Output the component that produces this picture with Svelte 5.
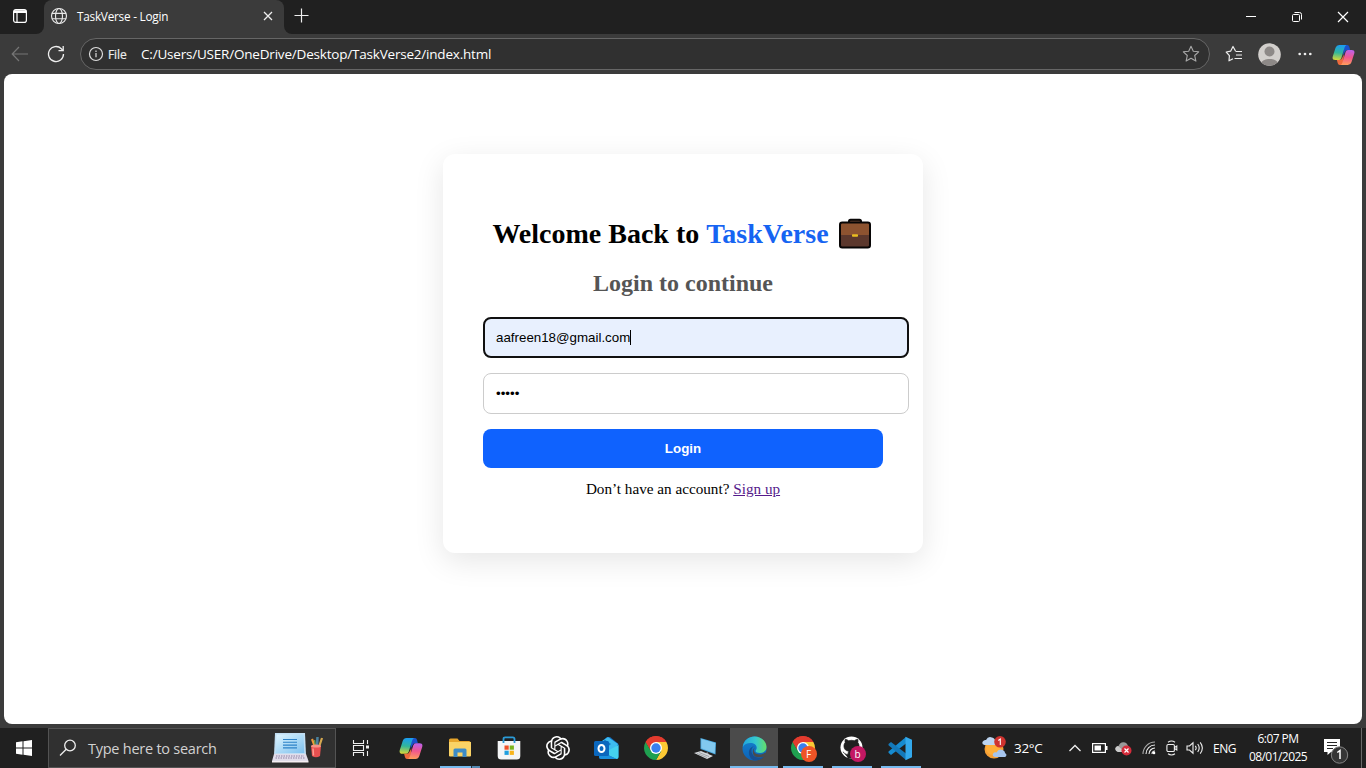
<script>
  const bars = [0, 1, 2, 3];
</script>

{#snippet copilot(size)}
  <svg width={size} height={size} viewBox="0 0 24 24">
    <defs>
      <linearGradient id="cpa" x1=".3" y1="0" x2=".2" y2="1"><stop offset="0" stop-color="#1b9df0" /><stop offset=".5" stop-color="#32b69a" /><stop offset="1" stop-color="#dcd936" /></linearGradient>
      <linearGradient id="cpb" x1=".3" y1="1" x2=".4" y2="0"><stop offset="0" stop-color="#ba62ee" /><stop offset=".5" stop-color="#f0568f" /><stop offset="1" stop-color="#ff9a5c" /></linearGradient>
    </defs>
    <path d="M12.500 2h3.500q1.500 0 2 1.800l.9 3.400h-2.700q-2 0-2.800 2.200L11.500 13z" fill="#1b50cc" />
    <path d="M7.500 2H15q-1.200.6-1.800 2.500L9.700 15.800Q9 17.800 7.300 17.800H3.500Q-.2 17.800.8 14L3.700 5Q4.700 2 7.500 2z" fill="url(#cpa)" />
    <g transform="rotate(180 12 12.500)">
      <path d="M12.500 2h3.500q1.500 0 2 1.800l.9 3.400h-2.700q-2 0-2.800 2.200L11.500 13z" fill="#ee6a3c" />
      <path d="M7.500 2H15q-1.200.6-1.800 2.500L9.700 15.800Q9 17.800 7.300 17.800H3.500Q-.2 17.800.8 14L3.700 5Q4.700 2 7.500 2z" fill="url(#cpb)" />
    </g>
  </svg>
{/snippet}

{#snippet chrome(size)}
  <svg width={size} height={size} viewBox="0 0 24 24">
    <path d="M12 12 1.610 6A12 12 0 0 1 22.390 6z" fill="#e33b2e" />
    <path d="M12 12V6h10.390A12 12 0 0 1 12 24l5.200-9z" fill="#fcc934" />
    <path d="M1.610 6A12 12 0 0 0 12 24l5.200-9L12 12 6.800 15z" fill="#1fa050" />
    <path d="M1.610 6 6.800 15 12 12 10 6z" fill="#1fa050" />
    <path d="M1.610 6A12 12 0 0 1 22.390 6H12L6.800 9 6.500 14.200z" fill="#e33b2e" />
    <circle cx="12" cy="12" r="6" fill="#fff" /><circle cx="12" cy="12" r="4.700" fill="#397fee" />
  </svg>
{/snippet}

<div class="screen">
  <header class="tabs">
    <div class="workspace">
      <svg width="16" height="16" viewBox="0 0 16 16" fill="none" stroke="#fff" stroke-width="1.200"><rect x="1.600" y="1.600" width="12.800" height="12.800" rx="2.200" /><path d="M2 3h12M2 4.300h12" stroke-width="1.600" /><path d="M5 5v9" /></svg>
    </div>
    <div class="tab">
      <svg class="globe" width="18" height="18" viewBox="0 0 18 18" fill="none" stroke="#e8e8e8" stroke-width="1.150"><circle cx="9" cy="9" r="7.500" /><ellipse cx="9" cy="9" rx="3.500" ry="7.500" /><path d="M2 6.300h14M2 11.700h14" /></svg>
      <span class="title">TaskVerse - Login</span>
      <svg class="x" width="10" height="10" viewBox="0 0 10 10" stroke="#eee" stroke-width="1.300"><path d="M1 1l8 8M9 1 1 9" /></svg>
    </div>
    <svg class="plus" width="15" height="15" viewBox="0 0 15 15" stroke="#eee" stroke-width="1.200"><path d="M7.500.5v14M.5 7.500h14" /></svg>
    <div class="window">
      <svg width="46" height="34" viewBox="0 0 46 34" stroke="#fff"><path d="M18 16.500h10" /></svg>
      <svg width="46" height="34" viewBox="0 0 46 34" fill="none" stroke="#fff"><rect x="18.500" y="14.500" width="7" height="7" rx="1" /><path d="M20.500 12.500h5q2 0 2 2v5" /></svg>
      <svg width="46" height="34" viewBox="0 0 46 34" stroke="#fff" stroke-width="1.200"><path d="M18 12l10 10M28 12 18 22" /></svg>
    </div>
  </header>

  <div class="toolbar">
    <svg class="back" width="18" height="16" viewBox="0 0 18 16" fill="none" stroke="#767676" stroke-width="1.200"><path d="M17 8H1.500M8 1 1.200 8 8 15" /></svg>
    <svg class="reload" width="18" height="18" viewBox="0 0 18 18" fill="none" stroke="#eee" stroke-width="1.300"><path d="M16.500 9A7.500 7.500 0 1 1 14.300 3.700L16 5.500" /><path d="M16.200 1v4.700h-4.700" /></svg>
    <div class="address">
      <svg width="16" height="16" viewBox="0 0 16 16" fill="none" stroke="#ddd" stroke-width="1.200"><circle cx="8" cy="8" r="6.500" /><path d="M8 7v4.200M8 4.600v1.300" /></svg>
      <span class="file">File</span>
      <span class="url">C:/Users/USER/OneDrive/Desktop/TaskVerse2/index.html</span>
      <svg class="star" width="18" height="18" viewBox="0 0 18 18" fill="none" stroke="#a8a8a8" stroke-width="1.100" stroke-linejoin="round"><path d="M9 1.200l2.300 5 5.400.6-4 3.700 1.200 5.600L9 13.300l-4.900 2.800 1.200-5.600-4-3.700 5.400-.6z" /></svg>
    </div>
    <svg class="fav" width="18" height="18" viewBox="0 0 18 18" fill="none" stroke="#eee" stroke-width="1.200" stroke-linejoin="round"><path d="M10.500 6 8 1.500 5.600 6.200 1.200 7l3.200 3.700L4 15.800l4-2.100M10.500 6.500H17M11 10h6M9.500 13.500H17" /></svg>
    <svg class="avatar" width="23" height="23" viewBox="0 0 23 23"><circle cx="11.500" cy="11.500" r="11.300" fill="#d2cfcc" /><circle cx="11.500" cy="8.500" r="5" fill="#8d8987" /><path d="M3.500 19.500C5 14.800 18 14.800 19.500 19.500a11.300 11.300 0 0 1-16 0z" fill="#8d8987" /></svg>
    <svg class="more" width="14" height="4" viewBox="0 0 14 4" fill="#eee"><circle cx="1.700" cy="2" r="1.350" /><circle cx="7" cy="2" r="1.350" /><circle cx="12.300" cy="2" r="1.350" /></svg>
    {@render copilot(23)}
  </div>

  <main>
    <section class="card">
      <h1><span>Welcome Back to <b>TaskVerse</b></span>
        <svg width="34" height="32" viewBox="0 0 34 32"><path d="M11 6V3.200q0-1.500 1.500-1.500h9q1.500 0 1.500 1.500V6" fill="#60402f" stroke="#080606" stroke-width="2" /><path d="M12.500 4.200h9" stroke="#8a5a44" stroke-width="1.200" /><rect x="2" y="4.500" width="30" height="25" rx="2.200" fill="#5c382d" /><path d="M2 6.500q0-2 2-2h26q2 0 2 2v9q0 1.500-2 1.500H4q-2 0-2-1.500z" fill="#8d5330" /><rect x="2" y="4.500" width="30" height="25" rx="2.200" fill="none" stroke="#080606" stroke-width="2" /><rect x="14" y="16.300" width="6" height="2.400" rx=".8" fill="#e9bd20" /></svg>
      </h1>
      <h2>Login to continue</h2>
      <div class="input focus">aafreen18@gmail.com<i></i></div>
      <div class="input">•••••</div>
      <button>Login</button>
      <p>Don’t have an account? <a href="#signup">Sign up</a></p>
    </section>
  </main>

  <footer class="taskbar">
    <div class="start"><svg width="16" height="16" viewBox="0 0 16 16" fill="#fff"><path d="M0 2.200 6.500 1.300V7.500H0zM7.500 1.150 16 0v7.500H7.500zM0 8.500h6.500v6.200L0 13.800zM7.500 8.500H16V16l-8.500-1.150z" /></svg></div>
    <div class="search">
      <svg width="18" height="18" viewBox="0 0 18 18" fill="none" stroke="#eee" stroke-width="1.300"><circle cx="11" cy="6.500" r="5.300" /><path d="M7.200 10.300 1 16.500" /></svg>
      <span>Type here to search</span>
      <svg class="art" width="52" height="32" viewBox="0 0 52 32">
        <defs><linearGradient id="scr" x1="0" y1="0" x2="1" y2="1"><stop stop-color="#dff5ff" /><stop offset="1" stop-color="#7cc0ee" /></linearGradient></defs>
        <path d="M3 1h30l1 22H2z" fill="#c1def3" /><path d="M4.500 2.500h27l.8 18.500H3.700z" fill="url(#scr)" />
        <path d="M11 7.500h14M11 10.300h14M11 13.100h14M11 15.900h14" stroke="#2c82c8" stroke-width="1.100" />
        <path d="M2 22h32l2.500 7H0z" fill="#e1ddea" /><path d="M4 24h28M3.500 26h29" stroke="#a99fbc" stroke-width="1.300" stroke-dasharray="1.500 1" /><path d="M0 29h36.500v1.500H0z" fill="#f5eef2" />
        <path d="m43 15-3-8" stroke="#ee9b38" stroke-width="2.200" /><path d="m45 15 .5-10" stroke="#4b829e" stroke-width="2.500" /><path d="m47 15 3-9" stroke="#d4a850" stroke-width="2.200" /><path d="m43.500 14-1-6" stroke="#5d9b58" stroke-width="1.500" />
        <path d="M39 14h10l-1 10q-4 2.500-8 0z" fill="#e95050" /><ellipse cx="44" cy="14" rx="5" ry="1.600" fill="#f49486" /><path d="M41 16.500l.5 7" stroke="#ff9d91" stroke-width="1.500" />
      </svg>
    </div>
    <div class="taskview"><svg width="18" height="16" viewBox="0 0 18 16" fill="none" stroke="#eee" stroke-width="1.100"><path d="M1.500 0v3.500h10V0M1.500 16v-3.500h10V16M15.500 0v4M15.500 11v5" /><path d="M1.500 5.500h10v5h-10z" /><path d="M14 5.500h3v3h-3z" fill="#eee" stroke="none" /></svg></div>

    <div class="cell">{@render copilot(24)}</div>
    <div class="cell open stacked">
      <svg width="22" height="20" viewBox="0 0 22 20"><path d="M0 2q0-1.500 1.500-1.500h7l2 2.500H20q1.500 0 1.500 1.500V18H0z" fill="#e7a52b" /><path d="M0 4h22v13.500q0 1-1 1H1q-1 0-1-1z" fill="#fad366" /><path d="M4.500 19v-7q0-1.500 1.500-1.500h10q1.500 0 1.500 1.500v7h-4v-4.500h-5V19z" fill="#3c8bc7" /></svg>
    </div>
    <div class="cell">
      <svg width="24" height="24" viewBox="0 0 24 24"><path d="M.7 5h22.600v15q0 3.500-3.500 3.500H4.200Q.7 23.500.7 20z" fill="#f4f5f6" /><path d="M6.500 7V3q0-1.700 1.700-1.700h7.600q1.700 0 1.700 1.700v4" fill="none" stroke="#2b9bd7" stroke-width="1.800" /><path d="M7.500 9.500h4.200v4.200H7.500z" fill="#ef5028" /><path d="M12.700 9.500h4.200v4.200h-4.200z" fill="#7ab51c" /><path d="M7.500 14.700h4.200v4.200H7.500z" fill="#209fdf" /><path d="M12.700 14.700h4.200v4.200h-4.200z" fill="#f9b51b" /></svg>
    </div>
    <div class="cell">
      <svg width="24" height="24" viewBox="0 0 24 24" fill="#fff"><path d="M22.282 9.821a5.985 5.985 0 0 0-.516-4.910 6.046 6.046 0 0 0-6.510-2.900A6.065 6.065 0 0 0 4.981 4.182a5.985 5.985 0 0 0-3.998 2.900 6.046 6.046 0 0 0 .743 7.097 5.980 5.980 0 0 0 .510 4.911 6.051 6.051 0 0 0 6.515 2.900A5.985 5.985 0 0 0 13.260 24a6.056 6.056 0 0 0 5.772-4.206 5.990 5.990 0 0 0 3.998-2.900 6.056 6.056 0 0 0-.748-7.073zM13.260 22.430a4.476 4.476 0 0 1-2.876-1.041l.141-.080 4.779-2.758a.795.795 0 0 0 .392-.681v-6.737l2.020 1.169a.071.071 0 0 1 .038.052v5.583a4.504 4.504 0 0 1-4.494 4.493zM3.600 18.304a4.471 4.471 0 0 1-.535-3.014l.142.085 4.783 2.759a.771.771 0 0 0 .780 0l5.843-3.369v2.332a.080.080 0 0 1-.033.062L9.740 19.950a4.500 4.500 0 0 1-6.140-1.646zM2.340 7.896a4.485 4.485 0 0 1 2.366-1.973V11.600a.766.766 0 0 0 .388.677l5.815 3.354-2.020 1.169a.076.076 0 0 1-.071 0l-4.830-2.787A4.504 4.504 0 0 1 2.340 7.872zm16.597 3.855-5.833-3.387L15.119 7.200a.076.076 0 0 1 .071 0l4.830 2.791a4.494 4.494 0 0 1-.676 8.105v-5.678a.790.790 0 0 0-.407-.667zm2.010-3.023-.141-.085-4.774-2.782a.776.776 0 0 0-.785 0L9.409 9.230V6.897a.066.066 0 0 1 .028-.061l4.830-2.787a4.499 4.499 0 0 1 6.680 4.660zM8.307 12.863l-2.020-1.164a.080.080 0 0 1-.038-.057V6.075a4.499 4.499 0 0 1 7.375-3.453l-.142.080-4.778 2.758a.795.795 0 0 0-.393.681zm1.097-2.365 2.602-1.500 2.607 1.500v2.999l-2.597 1.500-2.607-1.500z" /></svg>
    </div>
    <div class="cell">
      <svg width="25" height="24" viewBox="0 0 25 24"><path d="M5 8 13 1h3l8.500 7v13q0 2-2 2H7q-2 0-2-2z" fill="#1166b7" /><path d="m14 1 10 7-4 7H8V5z" fill="#3dbbef" /><path d="m10 3 7 5-6 5z" fill="#177ec8" /><path d="m24.500 9-15 8 13 6q2 0 2-2z" fill="#44d1ef" /><path d="m6 15 16.500 8H7q-2 0-2-2z" fill="#1a91df" /><rect y="5" width="15" height="15" rx="1.500" fill="#0b67bd" /><ellipse cx="7.500" cy="12.500" rx="3" ry="3.500" fill="none" stroke="#fff" stroke-width="2" /></svg>
    </div>
    <div class="cell">{@render chrome(24)}</div>
    <div class="cell">
      <svg width="24" height="24" viewBox="0 0 24 24"><path d="m7.500 2 15.500 4.500-.5 12L7.500 13z" fill="#4ca9df" /><path d="m8.300 3 13.900 4-.5 10.300-13.400-5z" fill="#82c9ef" /><path d="m12 17 3-.8 1 3-4 .2z" fill="#8b9297" /><path d="m1 17 7-2 12 5-6 3z" fill="#d5d7da" /><path d="m4 17.500 10 4M6 16.500l10 4" stroke="#9fa4a9" /></svg>
    </div>
    <div class="cell active open">
      <svg width="25" height="25" viewBox="0 0 25 25">
        <defs><linearGradient id="eg1"><stop stop-color="#21a4dd" /><stop offset=".55" stop-color="#36c9ce" /><stop offset="1" stop-color="#65df68" /></linearGradient><linearGradient id="eg2" x2="0" y2="1"><stop stop-color="#1683d0" /><stop offset="1" stop-color="#0c62b6" /></linearGradient></defs>
        <circle cx="12.500" cy="12.500" r="12" fill="url(#eg2)" /><path d="M.8 11C1.500 4 7 .5 12.500.5c7 0 12 5 12 10.500 0 4-3 6-6.500 6-3 0-4.500-1-4.500-2 0-.7 1.200-1.300 1.200-3.200C14.700 9 12 7 8.500 7 5 7 2.200 8.500.8 11z" fill="url(#eg1)" /><path d="M12.500 10C8 11.500 8 20 15.500 21.500c3 .6 5-.3 7-2-2.300 3.500-6 5.200-9.500 5C6 23 4 12 12.500 10z" fill="#174f91" /><path d="M13 11.500c-2.500 2.500-1 7 4 7 3 0 4.500-.8 6.200-2l1.800 1-2 3c-1.500-.6-4 1.500-8 .5C9.500 20 10 13 13 11.500z" fill="#4b4b4b" />
      </svg>
    </div>
    <div class="cell open badge"><div>{@render chrome(24)}<span class="orange">F</span></div></div>
    <div class="cell open badge"><div>
      <svg width="23" height="23" viewBox="0 0 24 24"><circle cx="12" cy="12" r="11.500" fill="#fff" /><path d="M8.500 23v-4C5 20 4.500 17 3 16.500M15.500 23v-5c0-1-.4-1.700-.8-2.100 2.900-.3 5.200-1.700 5.200-5.700 0-1.400-.5-2.500-1.300-3.400.3-.9.300-2.200-.1-3.300-1.300 0-2.600.8-3.500 1.400a12 12 0 0 0-6 0C8 4.300 6.800 3.500 5.500 3.500c-.4 1.100-.4 2.400-.1 3.300A5 5 0 0 0 4.100 10.200c0 4 2.300 5.400 5.200 5.700-.5.500-.8 1.200-.8 2.100V23z" fill="#202020" stroke="#202020" stroke-width=".7" /></svg>
      <span class="pink">b</span></div></div>
    <div class="cell open">
      <svg width="25" height="25" viewBox="0 0 25 25"><path d="M18 1v6.500L3 19l-2.500-2.200v-1.200z" fill="#168bd0" /><path d="M18 24v-6.500L3 6 .5 8v1.300z" fill="#1479ba" /><path d="m17.500.7 6.500 3v17.600l-6.500 3z" fill="#33a9ec" /></svg>
    </div>

    <div class="tray">
      <svg class="weather" width="26" height="24" viewBox="0 0 26 24"><circle cx="12" cy="13" r="9.500" fill="#f7a035" /><circle cx="11" cy="12" r="7" fill="#ffae39" /><path d="M2.500 9Q-.5 8.500.6 5.800 2 3.500 4 4q2-4 6-2.500 3 .8 3 3.500 2.500 1.500 0 4z" fill="#bdd5f1" /><path d="M13 21q-3-.5-2-3.200Q12.500 15.800 14.500 16.500q2-4 6-2.500 2.500 1 2.700 3.300 2.500 1.700 0 3.700z" fill="#a6c5ee" /><circle cx="18" cy="5.800" r="5.800" fill="#cf332f" /><path d="m16.300 4.500 2-1.500v6" fill="none" stroke="#fff" stroke-width="1.100" /></svg>
      <span class="temp">32°C</span>
      <svg class="up" width="12" height="8" viewBox="0 0 12 8" fill="none" stroke="#eee" stroke-width="1.300"><path d="m.5 7 5.500-5.500L11.500 7" /></svg>
      <svg class="bat" width="16" height="10" viewBox="0 0 16 10"><rect x=".6" y=".6" width="12.800" height="8.800" fill="none" stroke="#fff" stroke-width="1.200" /><path d="M2.500 2.500H9v5H2.500z" fill="#fff" /><path d="M14 3h1.500v4H14z" fill="#fff" /></svg>
      <svg class="cloud" width="17" height="15" viewBox="0 0 17 15"><path d="M3 11Q-.5 9.500.6 6.700 1.600 5 3.500 5 5 1 8.500 1.200 12 1.300 13 5q2.500 1 1.500 4l-4 2z" fill="#999" /><path d="M3 5 10 11H3Q-.5 9.500.6 6.700 1.600 5 3 5z" fill="#ccc" /><circle cx="11.500" cy="9.500" r="5" fill="#d52c3b" /><path d="m9.500 7.500 4 4m0-4-4 4" stroke="#fff" stroke-width="1.200" /></svg>
      <svg class="wifi" width="14" height="14" viewBox="0 0 14 14" fill="none" stroke="#eee" stroke-width="1.100">
        {#each bars as n}<path d={`M${1 + n * 3} 13A${12 - n * 3} ${12 - n * 3} 0 0 1 13 ${1 + n * 3}`} stroke={n === 0 ? '#aaa' : '#eee'} />{/each}<circle cx="12" cy="12" r="1.300" fill="#fff" stroke="none" />
      </svg>
      <svg class="cam" width="12" height="16" viewBox="0 0 12 16" fill="none" stroke="#eee" stroke-width="1.100"><path d="M2 2.200Q5.500-.2 9 2.200M2 13.800q3.500 2.400 7 0" /><rect x=".9" y="4.500" width="7.500" height="7" rx="1.300" /><path d="m8.500 7.500 2.300-1.500v4L8.500 8.500z" /></svg>
      <svg class="vol" width="18" height="14" viewBox="0 0 18 14" fill="none" stroke="#eee" stroke-width="1.100"><path d="M1 5h2.500L7 1.800v10.400L3.500 9H1zM9.300 4.800q1.700 2.200 0 4.400M11.700 3q3 4 0 8M14.200 1.300q4.300 5.700 0 11.400" /></svg>
      <span class="eng">ENG</span>
      <div class="clock"><span>6:07 PM</span><span>08/01/2025</span></div>
      <svg class="note" width="27" height="26" viewBox="0 0 27 26"><path d="M1 1h16v13H8l-3.500 3V14H1z" fill="#fff" /><path d="M4 4.500h10M4 7.500h10M4 10.500h6" stroke="#282828" stroke-width="1.200" /><circle cx="16.500" cy="17" r="8.200" fill="#363636" stroke="#858585" /><path d="m14.300 14.500 2.700-2V21" fill="none" stroke="#fff" stroke-width="1.500" /></svg>
      <i class="edge"></i>
    </div>
  </footer>
</div>

<style>
  :global(body) { margin: 0; background: #3b3b3b; overflow: hidden; }
  .screen { width: 1366px; height: 768px; display: flex; flex-direction: column; background: #3b3b3b; color: #fff; font-family: "Open Sans", "Noto Sans", sans-serif; box-sizing: border-box; }
  svg { display: block; flex: none; }
  span { white-space: nowrap; }
  .tabs { height: 34px; display: flex; align-items: flex-start; background: linear-gradient(#202020 0 24px, #3b3b3b 24px); }
  .workspace { width: 44px; height: 34px; box-sizing: border-box; padding: 8px 0 0 12px; background: #202020; border-radius: 0 0 8px 0; }
  .tab { width: 240px; height: 34px; display: flex; align-items: center; background: #3b3b3b; border-radius: 8px 8px 0 0; padding: 0 11px 2px 6px; box-sizing: border-box; }
  .title { font-size: 11.800px; line-height: 16px; margin-left: 9px; flex: 1; letter-spacing: -.25px; }
  .plus { padding: 8px 0 11px 10px; }
  .plus, .window { background: #202020; }
  .plus { border-bottom-left-radius: 8px; }
  .window { display: flex; flex: 1; justify-content: flex-end; }
  .toolbar { height: 40px; display: flex; align-items: center; box-sizing: border-box; padding: 0 11px; }
  .reload { margin-left: 18px; }
  .address { width: 1130px; height: 32px; margin-left: 15px; border: 1px solid #666; background: #303030; border-radius: 16px; display: flex; align-items: center; padding: 0 9px 0 7px; box-sizing: border-box; }
  .file { font-size: 12px; margin-left: 4px; width: 33px; letter-spacing: -.1px; color: #ececec; -webkit-text-stroke: .2px #ececec; }
  .url { font-size: 13.500px; letter-spacing: -.2px; flex: 1; }
  .fav { margin-left: 15px; }
  .avatar { margin: 0 17px 0 15.500px; }
  .more { margin-right: 20px; }
  main { width: 1358px; height: 650px; margin: 0 4px 4px; border-radius: 8px; background: #fff; color: #000; box-sizing: border-box; padding-top: 80px; font-family: "Liberation Serif", serif; }
  .card { width: 480px; height: 399px; margin: 0 auto; padding: 62px 40px 0; box-sizing: border-box; border-radius: 12px; box-shadow: 0 8px 30px rgba(0,0,0,.1); display: flex; flex-direction: column; }
  h1 { margin: 0; padding-right: 2px; height: 36px; display: flex; align-items: center; justify-content: center; gap: 9px; font-size: 28px; line-height: 36px; }
  b { color: #1664f2; }
  h2 { margin: 17px 0 20px; text-align: center; font-size: 24px; line-height: 28px; color: #555; }
  .input { width: 426px; height: 41px; box-sizing: border-box; border: 1px solid #ccc; border-radius: 8px; padding: 0 12px; margin-bottom: 15px; display: flex; align-items: center; font: 13.333px "Liberation Sans", sans-serif; }
  .focus { border: 2px solid #101010; padding: 0 11px; background: #e8f0fe; }
  .focus i { width: 1px; height: 15px; background: #000; }
  button { width: 400px; height: 39px; border: 0; border-radius: 8px; background: #0f62fe; color: #fff; font: bold 13.333px "Liberation Sans", sans-serif; padding: 0; }
  p { margin: 12px 0 0; text-align: center; font-size: 15.200px; line-height: 18px; }
  a { color: #551a8b; }
  .taskbar { height: 40px; background: #202020; display: flex; }
  .start { width: 48px; display: flex; align-items: center; justify-content: center; }
  .search { width: 288px; height: 40px; box-sizing: border-box; border: 1px solid #535353; background: #303030; display: flex; align-items: center; padding: 0 11.500px 0 10px; }
  .search span { font-size: 14.500px; margin-left: 11px; flex: 1; color: #d2d2d2; letter-spacing: -.25px; }
  .taskview { width: 50px; display: flex; align-items: center; justify-content: center; }
  .cell { width: 49px; height: 40px; display: flex; align-items: center; justify-content: center; position: relative; }
  .open::after { content: ""; position: absolute; left: 5px; right: 4px; bottom: 0; height: 2px; background: #76b9ed; }
  .active { background: #4b4b4b; width: 48px; margin-left: 1px; }
  .active::after { left: 0; right: 0; }
  .stacked::after { background: linear-gradient(90deg, #76b9ed 31px, #26323b 31px 32px, #5489b2 32px); }
  .badge div { position: relative; width: 24px; height: 25px; }
  .badge span { position: absolute; left: 10px; top: 10px; width: 16px; height: 16px; border-radius: 50%; font-size: 10px; line-height: 16px; text-align: center; }
  .orange { background: #ef5426; }
  .pink { background: #c31863; }
  .tray { flex: 1; display: flex; align-items: center; padding-left: 57px; font-size: 12px; }
  .temp { width: 29px; margin-left: 6px; font-size: 13.500px; letter-spacing: -.3px; }
  .up { margin-left: 26px; }
  .bat { margin-left: 11px; }
  .cloud { margin-left: 7px; }
  .wifi { margin-left: 10px; }
  .cam { margin-left: 10px; }
  .vol { margin-left: 8px; }
  .eng { width: 23px; margin-left: 9px; font-size: 12px; letter-spacing: -.5px; }
  .clock { display: flex; flex-direction: column; align-items: center; width: 60px; margin-left: 12px; font-size: 12px; line-height: 18px; letter-spacing: -.55px; }
  .note { margin: 6px 0 0 15px; }
  .edge { width: 1px; height: 40px; margin-left: auto; margin-right: 4px; background: #686868; }
</style>
